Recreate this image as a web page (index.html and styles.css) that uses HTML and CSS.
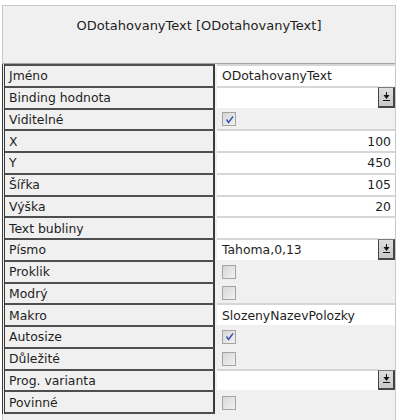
FILE: index.html
```html
<!DOCTYPE html>
<html lang="cs">
<head>
    <meta charset="UTF-8">
    <title>Vlastnosti</title>
    <link rel="stylesheet" href="styles.css">
</head>
<body>
    <div class="panel">
        <div class="caption">ODotahovanyText [ODotahovanyText]</div>
        <div class="grid">
            <div class="row"><div class="name">Jméno</div><div class="val edit">ODotahovanyText</div></div>
            <div class="row"><div class="name">Binding hodnota</div><div class="val combo"><div class="field"></div><div class="drop"><svg width="7" height="10" viewBox="0 0 7 10"><rect x="3" y="0" width="1" height="3"/><polygon points="0.5,3 6.5,3 3.5,7"/><rect x="0" y="8" width="7" height="1"/></svg></div></div></div>
            <div class="row"><div class="name">Viditelné</div><div class="val"><span class="chk"><svg width="11" height="11" viewBox="0 0 11 11"><polyline points="2.5,5.5 4.5,8.5 9,2.5"/></svg></span></div></div>
            <div class="row"><div class="name">X</div><div class="val edit num">100</div></div>
            <div class="row"><div class="name">Y</div><div class="val edit num">450</div></div>
            <div class="row"><div class="name">Šířka</div><div class="val edit num">105</div></div>
            <div class="row"><div class="name">Výška</div><div class="val edit num">20</div></div>
            <div class="row"><div class="name">Text bubliny</div><div class="val edit"></div></div>
            <div class="row"><div class="name">Písmo</div><div class="val combo"><div class="field">Tahoma,0,13</div><div class="drop"><svg width="7" height="10" viewBox="0 0 7 10"><rect x="3" y="0" width="1" height="3"/><polygon points="0.5,3 6.5,3 3.5,7"/><rect x="0" y="8" width="7" height="1"/></svg></div></div></div>
            <div class="row"><div class="name">Proklik</div><div class="val"><span class="chk"></span></div></div>
            <div class="row"><div class="name">Modrý</div><div class="val"><span class="chk"></span></div></div>
            <div class="row"><div class="name">Makro</div><div class="val edit">SlozenyNazevPolozky</div></div>
            <div class="row"><div class="name">Autosize</div><div class="val"><span class="chk"><svg width="11" height="11" viewBox="0 0 11 11"><polyline points="2.5,5.5 4.5,8.5 9,2.5"/></svg></span></div></div>
            <div class="row"><div class="name">Důležité</div><div class="val"><span class="chk"></span></div></div>
            <div class="row"><div class="name">Prog. varianta</div><div class="val combo"><div class="field"></div><div class="drop"><svg width="7" height="10" viewBox="0 0 7 10"><rect x="3" y="0" width="1" height="3"/><polygon points="0.5,3 6.5,3 3.5,7"/><rect x="0" y="8" width="7" height="1"/></svg></div></div></div>
            <div class="row last"><div class="name">Povinné</div><div class="val"><span class="chk"></span></div></div>
        </div>
    </div>
</body>
</html>
```

FILE: styles.css
```css
body {
    margin: 0;
    background: #fff;
    font-family: "DejaVu Sans", Verdana, sans-serif;
    font-size: 12.4px;
    color: #1e1e1e;
}
.panel {
    margin: 5px 0 0 2px;
    width: 392px;
    height: 415px;
    border: 1px solid #c9c9c9;
    border-bottom: none;
    background: #f0f0f0;
}
.caption {
    height: 45px;
    padding-top: 12px;
    line-height: 15px;
    font-size: 13px;
    text-align: center;
    border-bottom: 1px solid #a4a4a4;
}
.grid {
    margin-left: -1px;
    border-left: 3px double #3a3a3a;
}
.row {
    display: flex;
    height: 21.75px;
}
.row.last {
    height: 23.75px;
}
.name {
    box-sizing: border-box;
    width: 210px;
    padding-left: 4px;
    border-top: 2px solid #4e4e4e;
    border-right: 2px solid #3a3a3a;
    display: flex;
    align-items: center;
}
.row.last .name {
    border-bottom: 2px solid #4e4e4e;
}
.val {
    flex: 1;
    margin-left: 2px;
    border-top: 2px solid transparent;
    display: flex;
    align-items: center;
}
.edit {
    background: #fff;
    border-top-color: #d6d6d6;
    padding: 0 4px 0 5px;
}
.num {
    justify-content: flex-end;
}
.combo {
    align-items: stretch;
    border-top: none;
}
.combo .field {
    flex: 1;
    background: #fff;
    border-top: 2px solid #d6d6d6;
    padding-left: 5px;
    display: flex;
    align-items: center;
}
.drop {
    box-sizing: border-box;
    width: 17px;
    margin-top: 1px;
    background: linear-gradient(#dedede, #c8c8c8);
    border: 1px solid #444;
    border-right-width: 2px;
    border-bottom-width: 2px;
    border-top-color: #7a7a7a;
    display: flex;
    align-items: center;
    justify-content: center;
}
.drop svg {
    fill: #111;
}
.chk {
    box-sizing: border-box;
    width: 14px;
    height: 14px;
    margin-left: 5px;
    border: 1px solid #a4a4a4;
    background: linear-gradient(135deg, #d6d6d6, #f2f2f2);
    display: flex;
    align-items: center;
    justify-content: center;
}
.chk svg {
    fill: none;
    stroke: #3652b4;
    stroke-width: 1.4;
}
```
